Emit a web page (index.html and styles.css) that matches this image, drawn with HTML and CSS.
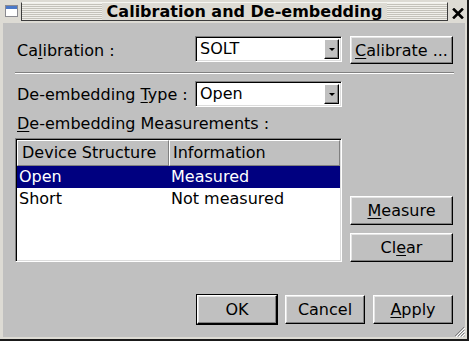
FILE: index.html
```html
<!doctype html>
<html lang="en">
<head>
<meta charset="utf-8">
<title>Calibration and De-embedding</title>
<link rel="stylesheet" href="styles.css">
</head>
<body>

	<div class="window">

		<div class="titlebar">
			<svg class="app-icon" width="13" height="12" viewBox="0 0 13 12">
				<rect x="0.5" y="0.5" width="12" height="11" fill="#fff" stroke="#8a8a90"/>
				<rect x="1" y="1" width="11" height="3" fill="#4a78c8"/>
			</svg>
			<div class="title-strip"><span class="title">Calibration and De-embedding</span></div>
			<svg class="close-icon" width="12" height="11" viewBox="0 0 12 11">
				<path d="M2 1.5 L10 9.5 M10 1.5 L2 9.5" stroke="#000" stroke-width="2.6" stroke-linecap="square"/>
			</svg>
		</div>

		<div class="dialog">

			<div class="row row-cal">
				<span class="label">Ca<u>l</u>ibration :</span>
				<div class="combo"><span class="combo-text">SOLT</span><span class="combo-arrow"></span></div>
				<button class="btn btn-wide"><u>C</u>alibrate ...</button>
			</div>

			<div class="sep"></div>

			<div class="row row-type">
				<span class="label">De-embedding <u>T</u>ype :</span>
				<div class="combo"><span class="combo-text">Open</span><span class="combo-arrow"></span></div>
			</div>

			<div class="label label-meas"><u>D</u>e-embedding Measurements :</div>

			<div class="meas">

				<div class="table">
					<div class="thead">
						<div class="th th-first">Device Structure</div>
						<div class="th">Information</div>
					</div>
					<div class="tr selected">
						<div class="td td-first">Open</div>
						<div class="td">Measured</div>
					</div>
					<div class="tr">
						<div class="td td-first">Short</div>
						<div class="td">Not measured</div>
					</div>
				</div>

				<div class="side-buttons">
					<button class="btn btn-wide"><u>M</u>easure</button>
					<button class="btn btn-wide">Cl<u>e</u>ar</button>
				</div>

			</div>

			<div class="footer">
				<button class="btn btn-default">OK</button>
				<button class="btn">Cancel</button>
				<button class="btn"><u>A</u>pply</button>
			</div>

			<svg class="grip" width="11" height="11" viewBox="0 0 11 11">
				<path d="M10 1 L1 10 M10 4 L4 10 M10 7 L7 10" stroke="#808080" stroke-width="1"/>
				<path d="M11 2 L2 11 M11 5 L5 11 M11 8 L8 11" stroke="#fff" stroke-width="1"/>
			</svg>

		</div>

	</div>

</body>
</html>
```

FILE: styles.css
```css
body, html { margin: 0; background: #c0c0c0; font: 16px "DejaVu Sans", sans-serif; color: #000; }
u { text-decoration-thickness: 1px; text-underline-offset: 2px; }

.window { width: 469px; height: 341px; box-sizing: border-box; background: #dddbd4; border-right: 2px solid #1a1a1a; border-bottom: 2px solid #1a1a1a; }

.titlebar { display: flex; align-items: flex-start; height: 23px; }
.app-icon { margin: 5px 0 0 5px; }
.title-strip { display: flex; align-items: center; justify-content: center; margin: 2px 0 0 3px; width: 427px; height: 19px; box-sizing: border-box;
	padding-left: 20px;
	border: 1px solid #3c3c3c; border-top-color: #f6f6f2;
	background: repeating-linear-gradient( to bottom, #f0efea 0 1px, #c4c2ba 1px 2px ); }
.title { background: #dddbd4; font-weight: bold; line-height: 17px; padding: 0 5px; }
.close-icon { margin: 8px 0 0 4px; }

.dialog { position: relative; margin-left: 3px; width: 462px; height: 314px; box-sizing: border-box; background: #c0c0c0; padding: 13px 12px 0 12px; }

.row { display: flex; align-items: center; }
.row-cal { height: 28px; }
.row-type { height: 26px; margin-top: 7px; }
.label { width: 180px; flex: none; padding-left: 2px; box-sizing: border-box; white-space: nowrap; }
.label-meas { width: auto; line-height: 19px; margin-top: 7px; }

.combo { display: flex; align-items: stretch; width: 147px; height: 26px; box-sizing: border-box; background: #fff;
	border: 1px solid; border-color: #808080 #fff #fff #808080; box-shadow: inset 1px 1px #000, inset -1px -1px #dcdcdc; padding: 2px 2px 2px 2px; }
.row-cal .combo { align-self: flex-start; }
.row-type .combo { height: 26px; }
.combo-text { flex: 1; padding-left: 2px; line-height: 20px; }
.combo-arrow { position: relative; width: 15px; box-sizing: border-box; background: #c0c0c0;
	border: 1px solid; border-color: #fff #000 #000 #fff; box-shadow: inset -1px -1px #808080; }
.combo-arrow::after { content: ""; position: absolute; left: 4px; top: 8px; border-left: 3px solid transparent; border-right: 3px solid transparent; border-top: 3px solid #000; }

.btn { font: inherit; color: #000; background: #c0c0c0; width: 80px; height: 29px; padding: 0; box-sizing: border-box;
	border: 1px solid; border-color: #fff #000 #000 #fff; box-shadow: inset -1px -1px #808080, inset 1px 1px #e4e4e4; }
.btn-wide { width: 103px; }
.row-cal .btn { margin-left: 8px; height: 28px; }
.btn-default { outline: 1px solid #000; }

.sep { margin-top: 8px; width: 439px; height: 1px; background: #808080; border-bottom: 1px solid #fff; }

.meas { display: flex; margin-top: 5px; height: 124px; }
.table { width: 327px; box-sizing: border-box; background: #fff;
	border: 1px solid; border-color: #808080 #fff #fff #808080; box-shadow: inset 1px 1px #000, inset -1px -1px #dcdcdc; padding: 1px; }
.thead { display: flex; height: 26px; background: #c0c0c0; }
.th { flex: 1; line-height: 24px; padding-left: 3px; box-sizing: border-box; border: 1px solid; border-color: #fff #808080 #808080 #fff; white-space: nowrap; }
.th-first { flex: none; width: 152px; padding-left: 4px; }
.tr { display: flex; height: 22px; line-height: 22px; }
.td { flex: 1; padding-left: 2px; white-space: nowrap; }
.td-first { flex: none; width: 150px; }
.selected { background: #000080; color: #fff; }

.side-buttons { display: flex; flex-direction: column; justify-content: flex-end; gap: 8px; margin-left: 8px; }

.footer { display: flex; justify-content: flex-end; gap: 8px; margin-top: 33px; }

.grip { position: absolute; right: 0; bottom: 0; }
```
